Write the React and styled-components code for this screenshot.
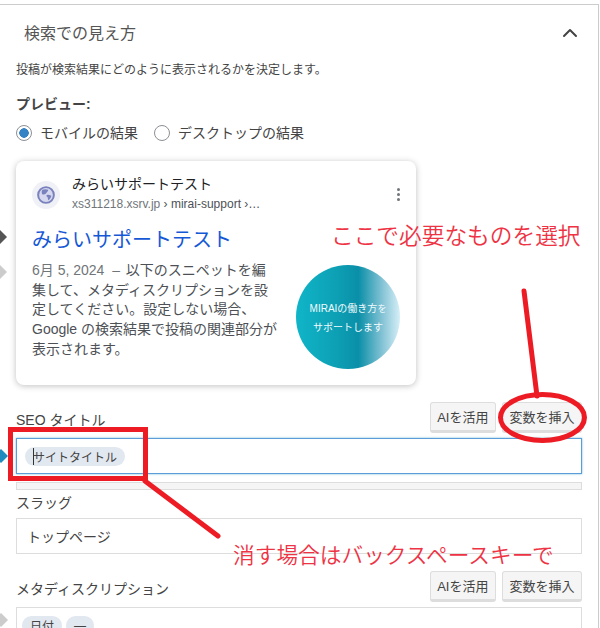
import React from "react";
import styled, { createGlobalStyle } from "styled-components";
import { ChevronUp } from "lucide-react";

const GlobalStyle = createGlobalStyle`
  html, body {
    margin: 0;
    padding: 0;
    background: #fff;
  }
  body {
    font-family: "Liberation Sans", "Noto Sans CJK JP", sans-serif;
    color: #444;
  }
`;

const App = () => {
  return (
    <Page>
      <GlobalStyle />
      <Panel>
        <PanelHeader>
          <PanelTitle>検索での見え方</PanelTitle>
          <ChevronUp size={24} strokeWidth={2} color="#444" />
        </PanelHeader>
        <PanelBody>
          <Description>投稿が検索結果にどのように表示されるかを決定します。</Description>
          <PreviewLabel>プレビュー:</PreviewLabel>
          <RadioRow>
            <RadioItem>
              <Radio $checked />
              モバイルの結果
            </RadioItem>
            <RadioItem>
              <Radio />
              デスクトップの結果
            </RadioItem>
          </RadioRow>

          <CardWrap>
            <Marker $color="#555" $top={69} />
            <Marker $color="#ccc" $top={104} />
            <Card>
              <SiteRow>
                <Favicon>
                  <svg width="18" height="18" viewBox="0 0 24 24">
                    <circle cx="12" cy="12" r="10.5" fill="#d5d8ee" stroke="#7a82bd" strokeWidth="2.6" />
                    <path
                      d="M7 5c3-1 6-1 8 0 0 2-2 3-3 5-2 1-3 2-5 1-1-2-1-4 0-6zM13 12c2-1 4 0 6 1 0 2-2 5-4 6-1-2 0-3-1-4-1-1-2-2-1-3z"
                      fill="#7a82bd"
                    />
                  </svg>
                </Favicon>
                <SiteText>
                  <SiteName>みらいサポートテスト</SiteName>
                  <SiteUrl>
                    xs311218.xsrv.jp <span>› mirai-support ›…</span>
                  </SiteUrl>
                </SiteText>
                <Dots>
                  <i />
                  <i />
                  <i />
                </Dots>
              </SiteRow>
              <ResultTitle>みらいサポートテスト</ResultTitle>
              <ResultRow>
                <Snippet>
                  <time>6月 5, 2024&nbsp;&nbsp;–&nbsp;</time>
                  以下のスニペットを編集して、メタディスクリプションを設定してください。設定しない場合、Google の検索結果で投稿の関連部分が表示されます。
                </Snippet>
                <Thumb>
                  <span>
                    MIRAIの働き方<small>を</small>
                  </span>
                  <span>サポートします</span>
                </Thumb>
              </ResultRow>
            </Card>
          </CardWrap>

          <FieldHead>
            <FieldLabel>SEO タイトル</FieldLabel>
            <ButtonGroup>
              <SmallButton>AIを活用</SmallButton>
              <SmallButton>変数を挿入</SmallButton>
            </ButtonGroup>
          </FieldHead>
          <InputBox $focused>
            <Marker $color="#1e8cbe" $top={10} />
            <Chip $inset>
              <Caret />
              サイトタイトル
            </Chip>
          </InputBox>
          <Progress />

          <SlugLabel>スラッグ</SlugLabel>
          <InputBox $gap={6}>トップページ</InputBox>

          <FieldHead>
            <FieldLabel>メタディスクリプション</FieldLabel>
            <ButtonGroup>
              <SmallButton>AIを活用</SmallButton>
              <SmallButton>変数を挿入</SmallButton>
            </ButtonGroup>
          </FieldHead>
          <DescriptionBox>
            <Marker $color="#ccc" $top={5} />
            <Chip>日付</Chip>
            <Chip>―</Chip>
          </DescriptionBox>
        </PanelBody>
      </Panel>

      <Annotations width="600" height="628" viewBox="0 0 600 628">
        <path d="M524 291 L537 396" fill="none" stroke="#ed1c24" strokeWidth="5" strokeLinecap="round" />
        <ellipse cx="542.5" cy="417.5" rx="42" ry="23" fill="none" stroke="#ed1c24" strokeWidth="5" />
        <rect x="10.5" y="429.5" width="135" height="49" fill="none" stroke="#ed1c24" strokeWidth="5" />
        <path d="M145 481 L218 536" fill="none" stroke="#ed1c24" strokeWidth="5" strokeLinecap="round" />
      </Annotations>
      <Note $left={331} $top={220} $size={22.7}>ここで必要なものを選択</Note>
      <Note $left={233} $top={540} $size={21.7}>消す場合はバックスペースキーで</Note>
    </Page>
  );
};

const Page = styled.div`
  position: relative;
  width: 600px;
  height: 628px;
  overflow: hidden;
  padding-top: 4px;
  box-sizing: border-box;
`;

const Panel = styled.section`
  width: 599px;
  height: 700px;
  box-sizing: border-box;
  border-top: 1px solid #ccc;
  border-right: 1px solid #ccc;
`;

const PanelHeader = styled.header`
  display: flex;
  align-items: center;
  justify-content: space-between;
  height: 57px;
  padding: 0 16px 2px 24px;
  box-sizing: border-box;
`;

const PanelTitle = styled.h2`
  margin: -2px 0 0;
  font-size: 16px;
  font-weight: 400;
  color: #555;
`;

const PanelBody = styled.div`
  padding: 0 16px;
`;

const Description = styled.p`
  margin: 0;
  font-size: 12px;
  line-height: 16px;
`;

const PreviewLabel = styled.div`
  margin-top: 16px;
  font-size: 14px;
  line-height: 20px;
  font-weight: 700;
  color: #444;
`;

const RadioRow = styled.div`
  display: flex;
  gap: 16px;
  margin-top: 9px;
`;

const RadioItem = styled.label`
  display: flex;
  align-items: center;
  gap: 8px;
  font-size: 14px;
  line-height: 20px;
  color: #444;
`;

const Radio = styled.span`
  width: 16px;
  height: 16px;
  box-sizing: border-box;
  border-radius: 50%;
  border: 1px solid #8c8f94;
  background: ${(p) =>
    p.$checked ? "radial-gradient(circle, #3582c4 0 4.5px, #fff 5px)" : "#fff"};
`;

const CardWrap = styled.div`
  position: relative;
  margin-top: 18px;
`;

const Marker = styled.span`
  position: absolute;
  left: -23px;
  top: ${(p) => p.$top}px;
  width: 14px;
  height: 14px;
  background: ${(p) => p.$color};
  clip-path: polygon(50% 0, 100% 50%, 50% 100%, 0 50%);
`;

const Card = styled.div`
  width: 400px;
  height: 224px;
  box-sizing: border-box;
  padding: 13px 16px 0;
  background: #fff;
  border-radius: 8px;
  box-shadow: 0 1px 6px rgba(32, 33, 36, 0.28);
`;

const SiteRow = styled.div`
  display: flex;
  align-items: center;
  gap: 12px;
`;

const Favicon = styled.span`
  display: flex;
  align-items: center;
  justify-content: center;
  width: 28px;
  height: 28px;
  margin-top: 1px;
  border-radius: 50%;
  background: #f0f1f6;
`;

const SiteText = styled.div`
  flex: 1;
`;

const SiteName = styled.div`
  font-size: 14px;
  line-height: 20px;
  color: #202124;
`;

const SiteUrl = styled.div`
  font-size: 12px;
  line-height: 20px;
  color: #70757a;
  span {
    color: #4d5156;
  }
`;

const Dots = styled.span`
  display: flex;
  flex-direction: column;
  gap: 2px;
  i {
    width: 3px;
    height: 3px;
    border-radius: 50%;
    background: #70757a;
  }
`;

const ResultTitle = styled.div`
  margin-top: 13px;
  font-size: 20px;
  line-height: 26px;
  color: #1558d6;
`;

const ResultRow = styled.div`
  display: flex;
  justify-content: space-between;
  align-items: flex-start;
  margin-top: 6px;
`;

const Snippet = styled.p`
  width: 246px;
  margin: 0;
  padding-top: 2px;
  font-size: 14px;
  line-height: 19.7px;
  color: #4d5156;
  time {
    padding-right: 2px;
    color: #70757a;
  }
`;

const Thumb = styled.div`
  display: flex;
  flex-direction: column;
  align-items: center;
  justify-content: center;
  gap: 3px;
  width: 104px;
  height: 104px;
  margin-top: 6px;
  padding-top: 2px;
  box-sizing: border-box;
  border-radius: 50%;
  font-size: 10px;
  line-height: 15px;
  color: #f2fbfd;
  background: linear-gradient(90deg, #10b5c8 0%, #0d9fb4 40%, #0a8fa8 60%, #7fc0d3 82%, #d6eff7 100%);
  small {
    font-size: 9px;
  }
`;

const FieldHead = styled.div`
  display: flex;
  align-items: flex-end;
  justify-content: space-between;
  margin-top: 17px;
`;

const FieldLabel = styled.label`
  margin-bottom: 3px;
  font-size: 14px;
  line-height: 20px;
  color: #444;
`;

const ButtonGroup = styled.div`
  display: flex;
  gap: 6px;
`;

const SmallButton = styled.button`
  height: 31px;
  padding: 0 6.5px;
  box-sizing: border-box;
  border: 1px solid #ddd;
  border-bottom-width: 3px;
  border-radius: 3px;
  background: #f5f5f5;
  font-family: inherit;
  font-size: 13px;
  color: #444;
`;

const InputBox = styled.div`
  position: relative;
  display: flex;
  align-items: center;
  height: 36px;
  margin-top: ${(p) => p.$gap ?? 5}px;
  padding: 0 10px;
  box-sizing: border-box;
  background: #fff;
  border: 1px solid ${(p) => (p.$focused ? "#5b9dd9" : "#ddd")};
  box-shadow: ${(p) => (p.$focused ? "0 0 2px rgba(30, 140, 190, 0.6)" : "none")};
  font-size: 14px;
  color: #444;
`;

const DescriptionBox = styled.div`
  position: relative;
  display: flex;
  align-items: flex-start;
  gap: 4px;
  height: 60px;
  margin-top: 5px;
  padding: 8px 5px;
  box-sizing: border-box;
  border: 1px solid #ddd;
`;

const Chip = styled.span`
  position: relative;
  display: inline-flex;
  align-items: center;
  height: 19px;
  margin-left: ${(p) => (p.$inset ? "-2px" : "0")};
  padding: 0 8px;
  border-radius: 10px;
  background: #e2e8f0;
  font-size: 12px;
  color: #444;
`;

const Caret = styled.i`
  position: absolute;
  left: 8px;
  top: 1px;
  width: 1px;
  height: 17px;
  background: #333;
`;

const Progress = styled.div`
  height: 8px;
  margin-top: 8px;
  box-sizing: border-box;
  border: 1px solid #ddd;
  background: #f5f5f5;
`;

const SlugLabel = styled.label`
  display: block;
  margin-top: 3px;
  margin-bottom: -1px;
  font-size: 14px;
  line-height: 20px;
  color: #444;
`;

const Annotations = styled.svg`
  position: absolute;
  left: 0;
  top: 0;
  pointer-events: none;
`;

const Note = styled.div`
  position: absolute;
  left: ${(p) => p.$left}px;
  top: ${(p) => p.$top}px;
  font-size: ${(p) => p.$size}px;
  font-weight: 350;
  line-height: 32px;
  white-space: nowrap;
  color: #ee3344;
`;

export default App;
